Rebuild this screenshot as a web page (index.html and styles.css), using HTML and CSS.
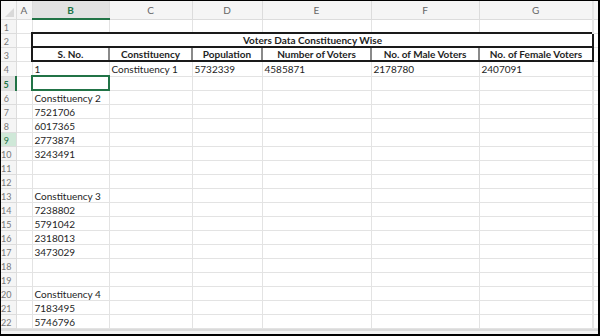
FILE: index.html
```html
<!DOCTYPE html>
<html lang="en">
<head>
    <meta charset="UTF-8">
    <title>Voters Data Constituency Wise</title>
    <link rel="stylesheet" href="styles.css">
</head>
<body>
    <div class="sheet">
        <table class="grid">
            <colgroup>
                <col class="w-rh"><col class="w-a"><col class="w-b"><col class="w-c">
                <col class="w-d"><col class="w-e"><col class="w-f"><col class="w-g"><col class="w-x">
            </colgroup>
            <thead>
                <tr class="col-head">
                    <th class="corner"><span class="tri"></span></th>
                    <th>A</th>
                    <th class="sel">B</th>
                    <th>C</th>
                    <th>D</th>
                    <th>E</th>
                    <th>F</th>
                    <th>G</th>
                    <th class="edge"></th>
                </tr>
            </thead>
            <tbody>
                <tr><th class="rn">1</th><td></td><td></td><td></td><td></td><td></td><td></td><td></td><td class="edge"></td></tr>
                <tr class="tall"><th class="rn">2</th><td></td><td class="title" colspan="6">Voters Data Constituency Wise</td><td class="edge"></td></tr>
                <tr class="heads"><th class="rn">3</th><td></td>
                    <td class="hd first">S. No.</td>
                    <td class="hd">Constituency</td>
                    <td class="hd">Population</td>
                    <td class="hd">Number of Voters</td>
                    <td class="hd">No. of Male Voters</td>
                    <td class="hd last">No. of Female Voters</td>
                    <td class="edge"></td></tr>
                <tr><th class="rn">4</th><td></td><td>1</td><td>Constituency 1</td><td>5732339</td><td>4585871</td><td>2178780</td><td>2407091</td><td class="edge"></td></tr>
                <tr><th class="rn row-sel">5</th><td></td><td class="active"><span class="handle"></span></td><td></td><td></td><td></td><td></td><td></td><td class="edge"></td></tr>
                <tr><th class="rn">6</th><td></td><td>Constituency 2</td><td></td><td></td><td></td><td></td><td></td><td class="edge"></td></tr>
                <tr><th class="rn">7</th><td></td><td>7521706</td><td></td><td></td><td></td><td></td><td></td><td class="edge"></td></tr>
                <tr><th class="rn">8</th><td></td><td>6017365</td><td></td><td></td><td></td><td></td><td></td><td class="edge"></td></tr>
                <tr><th class="rn row-hover">9</th><td></td><td>2773874</td><td></td><td></td><td></td><td></td><td></td><td class="edge"></td></tr>
                <tr><th class="rn">10</th><td></td><td>3243491</td><td></td><td></td><td></td><td></td><td></td><td class="edge"></td></tr>
                <tr><th class="rn">11</th><td></td><td></td><td></td><td></td><td></td><td></td><td></td><td class="edge"></td></tr>
                <tr><th class="rn">12</th><td></td><td></td><td></td><td></td><td></td><td></td><td></td><td class="edge"></td></tr>
                <tr><th class="rn">13</th><td></td><td>Constituency 3</td><td></td><td></td><td></td><td></td><td></td><td class="edge"></td></tr>
                <tr><th class="rn">14</th><td></td><td>7238802</td><td></td><td></td><td></td><td></td><td></td><td class="edge"></td></tr>
                <tr><th class="rn">15</th><td></td><td>5791042</td><td></td><td></td><td></td><td></td><td></td><td class="edge"></td></tr>
                <tr><th class="rn">16</th><td></td><td>2318013</td><td></td><td></td><td></td><td></td><td></td><td class="edge"></td></tr>
                <tr><th class="rn">17</th><td></td><td>3473029</td><td></td><td></td><td></td><td></td><td></td><td class="edge"></td></tr>
                <tr><th class="rn">18</th><td></td><td></td><td></td><td></td><td></td><td></td><td></td><td class="edge"></td></tr>
                <tr><th class="rn">19</th><td></td><td></td><td></td><td></td><td></td><td></td><td></td><td class="edge"></td></tr>
                <tr><th class="rn">20</th><td></td><td>Constituency 4</td><td></td><td></td><td></td><td></td><td></td><td class="edge"></td></tr>
                <tr><th class="rn">21</th><td></td><td>7183495</td><td></td><td></td><td></td><td></td><td></td><td class="edge"></td></tr>
                <tr><th class="rn">22</th><td></td><td>5746796</td><td></td><td></td><td></td><td></td><td></td><td class="edge"></td></tr>
            </tbody>
        </table>
        <div class="footer-bar"></div>
    </div>
</body>
</html>
```

FILE: styles.css
```css
* {
    box-sizing: border-box;
}

body {
    margin: 0;
    background: #fff;
    font-family: "Lato", "Open Sans", sans-serif;
}

.sheet {
    width: 600px;
    height: 336px;
    border: 1px solid #000;
    border-right-width: 2px;
    border-bottom-width: 2px;
    overflow: hidden;
    background: #fff;
    display: flex;
    flex-direction: column;
}

.grid {
    border-collapse: collapse;
    table-layout: fixed;
    width: 597px;
    font-size: 10px;
    color: #1e1e1e;
}

.w-rh { width: 15px; }
.w-a { width: 16px; }
.w-b { width: 77px; }
.w-c { width: 83px; }
.w-d { width: 70px; }
.w-e { width: 109px; }
.w-f { width: 108px; }
.w-g { width: 114px; }
.w-x { width: 5px; }

.grid td,
.grid th {
    padding: 2px 0 0 2px;
    border: 1px solid #e3e3e3;
    height: 13px;
    line-height: 11px;
    white-space: nowrap;
    overflow: hidden;
    text-align: left;
    vertical-align: middle;
    font-weight: normal;
}

.grid tr.tall td,
.grid tr.tall th {
    height: 14px;
}

.col-head th {
    height: 18px;
    background: #f5f5f5;
    color: #666;
    font-size: 10px;
    text-align: center;
    padding: 1px 0 0 0;
    border-color: #dcdcdc;
    border-top: 0;
}

.col-head th.sel {
    background: #e2e2e2;
    color: #217346;
    font-weight: bold;
    border-bottom: 2px solid #217346;
}

.corner {
    position: relative;
    border-left: 0 !important;
}

.tri {
    position: absolute;
    right: 2px;
    bottom: 2px;
    width: 0;
    height: 0;
    border-left: 9px solid transparent;
    border-bottom: 9px solid #d9d9d9;
}

.grid th.rn {
    background: #f5f5f5;
    color: #777;
    font-size: 9px;
    text-align: center;
    padding: 2px 4px 0 0;
    border-left: 0;
    border-color: #dcdcdc;
}

.grid th.row-sel {
    background: #e2e2e2;
    color: #217346;
    font-weight: bold;
    border-right: 2px solid #217346;
}

.grid th.row-hover {
    background: #cfe8d8;
    color: #217346;
}

.grid td.title {
    border: 2px solid #1a1a1a;
    text-align: center;
    font-weight: bold;
    padding: 1px 0 0 0;
}

.heads td.hd {
    border-top: 2px solid #1a1a1a;
    border-bottom: 2px solid #1a1a1a;
    border-left: 2px solid #8a8a8a;
    border-right: 2px solid #8a8a8a;
    text-align: center;
    font-weight: bold;
    padding: 1px 0 0 0;
}

.heads td.first {
    border-left: 2px solid #1a1a1a;
}

.heads td.last {
    border-right: 2px solid #1a1a1a;
}

.grid td.active {
    border: 2px solid #217346;
    position: relative;
}

.handle {
    position: absolute;
    right: -4px;
    bottom: -4px;
    width: 5px;
    height: 5px;
    background: #217346;
    border: 1px solid #fff;
}

.grid td.edge,
.grid th.edge {
    border-left: 2px solid #e6e6e6;
    border-right: 0;
}

.footer-bar {
    flex: 1;
    background: #f2f2f2;
    border-top: 2px solid #dadada;
}
```
